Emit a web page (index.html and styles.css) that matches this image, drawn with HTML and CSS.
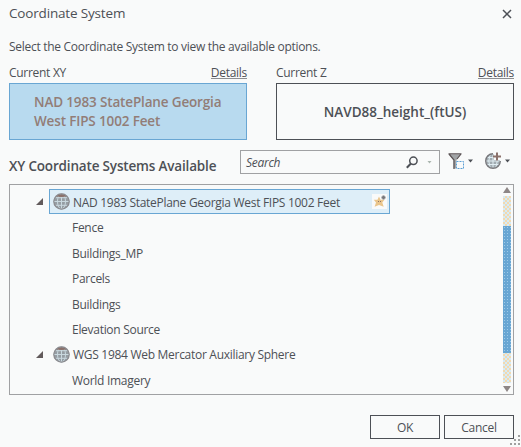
FILE: index.html
```html
<!DOCTYPE html>
<html lang="en">
<head>
<meta charset="utf-8">
<title>Coordinate System</title>
<link rel="stylesheet" href="styles.css">
</head>
<body>
<svg width="0" height="0" class="defs">
  <symbol id="globe" viewBox="0 0 17 17">
    <circle cx="8.5" cy="8.5" r="7.9" fill="#959da3"/>
    <g fill="none" stroke="#c9d8df" stroke-width="1"><path d="M1 8.5h15M2.5 4.7h12M2.5 12.3h12M8.5 1v15"/><ellipse cx="8.5" cy="8.5" rx="4" ry="7.5"/></g>
    <path d="M3 3.2Q8.5-1.2 14 3.2Q8.5 4.6 3 3.2Z" fill="#8b716b"/>
    <circle cx="8.5" cy="8.5" r="7.7" fill="none" stroke="#8c8c90" stroke-width="1.2"/>
  </symbol>
</svg>
<main class="dialog">
  <header class="titlebar">
    <h1 class="title">Coordinate System</h1>
    <svg class="close" width="10" height="10" viewBox="0 0 10 10"><path d="M1 1l8 8M9 1L1 9" stroke="#4d5056" stroke-width="1.5"/></svg>
  </header>
  <p class="intro">Select the Coordinate System to view the available options.</p>
  <section class="current">
    <div class="system">
      <div class="caption"><span>Current XY</span><a class="details">Details</a></div>
      <div class="card selected"><span>NAD 1983 StatePlane Georgia<br>West FIPS 1002 Feet</span></div>
    </div>
    <div class="system">
      <div class="caption"><span>Current Z</span><a class="details">Details</a></div>
      <div class="card vertical"><span>NAVD88_height_(ftUS)</span></div>
    </div>
  </section>
  <section class="toolbar">
    <h2 class="heading">XY Coordinate Systems Available</h2>
    <div class="search">
      <span class="placeholder">Search</span>
      <svg width="12" height="13" viewBox="0 0 12 13" fill="none" stroke="#4d5056"><circle cx="7.4" cy="4.8" r="3.7" stroke-width="1.5"/><path d="M4.7 7.7L.8 11.8" stroke-width="2"/></svg>
      <svg class="search-arrow" width="5" height="3" viewBox="0 0 5 3"><path d="M.5 0h4L2.5 2.5Z" fill="#a9b5ae"/></svg>
    </div>
    <svg class="filter" width="17" height="17" viewBox="0 0 17 17"><path d="M1 1.5h12L8.5 7v8.5h-3V7Z" fill="#a1a4a6"/><path d="M.5 .8h13M1 1l5 6v9M13 1L9 6" fill="none" stroke="#5b5355" stroke-width="1.2"/><path d="M8 8h9v9H8Z" fill="#f9fafa"/><rect x="8.5" y="8.5" width="7" height="7" fill="none" stroke="#5a9fd4" stroke-dasharray="2 1"/></svg>
    <svg class="arrow" width="5" height="4" viewBox="0 0 5 4"><path d="M0 .5h5L2.5 3.5Z" fill="#4d5056"/></svg>
    <svg class="add" width="17" height="17" viewBox="0 0 17 17"><circle cx="8" cy="9" r="7" fill="#a1abb1"/><path d="M1 9h14M2.5 5.5h11M2.5 12.5h11M8 2v14M5 3Q2.5 9 5 15M11 3Q13.5 9 11 15" fill="none" stroke="#e0edf2"/><path d="M8 1.7A7.3 7.3 0 1 0 15.3 9" fill="none" stroke="#77777b" stroke-width="1.4"/><path d="M9 0h8v8H9Z" fill="#f9fafa"/><path d="M12 .5v8M8 4.5h8" stroke="#8b716b" stroke-width="2"/></svg>
    <svg class="arrow" width="5" height="4" viewBox="0 0 5 4"><path d="M0 .5h5L2.5 3.5Z" fill="#4d5056"/></svg>
  </section>
  <section class="list">
    <ul class="tree">
      <li class="group"><svg class="expander" width="7" height="7" viewBox="0 0 7 7"><path d="M7 0v7H0Z" fill="#625a5b"/></svg>
        <div class="node active"><svg class="globe" width="17" height="17"><use href="#globe"/></svg><span class="label">NAD 1983 StatePlane Georgia West FIPS 1002 Feet</span>
          <i class="favorite"><svg width="15" height="15" viewBox="0 0 15 15"><path d="M7 2.5l1.5 3.2h4L10.3 8.4l1.4 4.4L7 11l-4.4 1.8L4 8.4 1.8 5.7h3.7Z" fill="#eac58b"/><path d="M6 7h1v1H6ZM8 7h1v1H8Z" fill="#8b716b"/><path d="M11.5 1.5v4M9.5 3.5h4" stroke="#77777b" stroke-width="2"/></svg></i></div></li>
      <li class="item">Fence</li>
      <li class="item">Buildings_MP</li>
      <li class="item">Parcels</li>
      <li class="item">Buildings</li>
      <li class="item">Elevation Source</li>
      <li class="group"><svg class="expander" width="7" height="7" viewBox="0 0 7 7"><path d="M7 0v7H0Z" fill="#625a5b"/></svg>
        <div class="node"><svg class="globe" width="17" height="17"><use href="#globe"/></svg><span class="label">WGS 1984 Web Mercator Auxiliary Sphere</span></div></li>
      <li class="item">World Imagery</li>
    </ul>
    <div class="scrollbar">
      <svg width="8" height="6" viewBox="0 0 8 6"><path d="M4 0l4 6H0Z" fill="#8e8787"/></svg>
      <div class="track"><div class="thumb"></div></div>
      <svg width="8" height="6" viewBox="0 0 8 6"><path d="M0 0h8L4 6Z" fill="#8e8787"/></svg>
    </div>
  </section>
  <footer class="actions"><button class="button">OK</button><button class="button">Cancel</button></footer>
  <svg class="grip" width="10" height="10" viewBox="0 0 10 10" fill="#a0a0a0"><path d="M8 0h2v2H8ZM4 4h2v2H4ZM8 4h2v2H8ZM0 8h2v2H0ZM4 8h2v2H4ZM8 8h2v2H8Z"/></svg>
</main>
</body>
</html>
```

FILE: styles.css
```css
* { box-sizing: border-box; margin: 0; padding: 0; }
body { background: #f9fafa; color: #4d5056; font: 12px/16px "Open Sans", "Noto Sans", sans-serif; letter-spacing: -0.29px; white-space: nowrap; }
svg { display: block; flex: none; }
.defs { position: absolute; }
.dialog { position: relative; width: 521px; height: 447px; padding: 0 7px 0 9px; overflow: hidden; }
.titlebar { display: flex; justify-content: space-between; height: 28px; padding: 4px 2px 0 0; }
.title { font-size: 13.5px; font-weight: 400; line-height: 19px; letter-spacing: -0.17px; }
.close { margin-top: 5px; }
.intro { height: 37px; padding-top: 11px; }
.current { display: flex; gap: 29px; height: 85px; }
.system { width: 238px; }
.caption { display: flex; justify-content: space-between; height: 18px; }
.details { height: 14px; border-bottom: 1px solid #8b8d91; }
.card { display: flex; align-items: center; justify-content: center; height: 57px; padding-top: 1px; border: 1px solid #4d5056; font-size: 13.5px; line-height: 19px; font-weight: 600; letter-spacing: -0.15px; }
.vertical { letter-spacing: 0; }
.selected { justify-content: flex-start; padding-left: 24px; background: #b8daef; border-color: #69a6d3; color: #927d77; }
.toolbar { display: flex; height: 34px; }
.heading { width: 231px; font-size: 13.5px; font-weight: 600; line-height: 33px; letter-spacing: -0.17px; }
.search { display: flex; align-items: center; width: 200px; height: 24px; padding: 1px 7px 0 5px; border: 1px solid #a0a1a3; }
.placeholder { flex: 1; font-style: italic; }
.search-arrow { margin-left: 9px; }
.filter { margin: 3px 3px 0 8px; }
.arrow { margin-top: 9px; }
.add { margin: 2px 3px 0 12px; }
.list { display: flex; justify-content: space-between; height: 211px; padding: 4px 2px 2px 0; border: 1px solid #a0a1a3; }
.tree { list-style: none; }
.group { display: flex; align-items: center; height: 25.4px; padding-left: 26px; }
.expander { margin-right: 6px; }
.node { display: flex; align-items: center; height: 25px; padding-left: 3px; border: 1px solid transparent; }
.active { width: 341px; background: #deeef8; border-color: #69a6d3; }
.globe { margin-right: 3px; }
.label { padding-top: 2px; }
.favorite { margin-left: auto; margin-right: 2px; background: #f9fafa; }
.item { height: 25.4px; padding-left: 62px; line-height: 27px; }
.scrollbar { display: flex; flex-direction: column; align-items: center; width: 8px; margin: -2px 0 0; }
.track { width: 8px; height: 187px; margin: 3px 0; padding-top: 30px; background: repeating-conic-gradient(#f2d9b0 0 25%, #d5ebf7 0 50%) 0 0 / 4px 4px; }
.thumb { height: 127px; background: radial-gradient(circle, #a0cbe8 0 .6px, #69a6d3 .7px) 0 0 / 3px 3px; }
.actions { display: flex; justify-content: flex-end; gap: 4px; margin-top: 20px; }
.button { width: 70px; height: 24px; padding-top: 2px; border: 1px solid #4d5056; background: #f9fafa; color: inherit; font: inherit; letter-spacing: inherit; }
.grip { position: absolute; right: 1px; bottom: 2px; }
```
